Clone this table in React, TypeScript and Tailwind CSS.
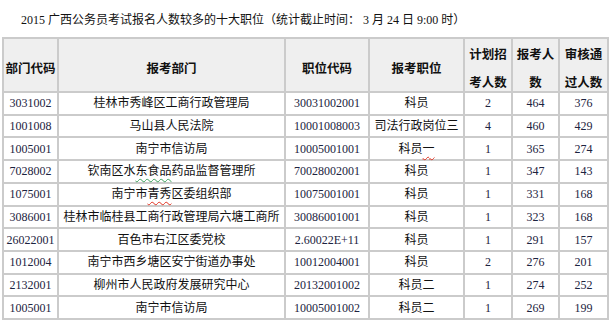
import React from "react";

interface Row {
  dept: string;
  name: React.ReactNode;
  code: string;
  post: React.ReactNode;
  plan: number;
  applied: number;
  passed: number;
}

const squiggleRed = "underline decoration-wavy decoration-[#e0301e] decoration-1 underline-offset-[3px]";
const squiggleGreen = "underline decoration-wavy decoration-[#3aa05a] decoration-1 underline-offset-[3px]";

const rows: Row[] = [
  { dept: "3031002", name: "桂林市秀峰区工商行政管理局", code: "30031002001", post: "科员", plan: 2, applied: 464, passed: 376 },
  { dept: "1001008", name: "马山县人民法院", code: "10001008003", post: "司法行政岗位三", plan: 4, applied: 460, passed: 429 },
  {
    dept: "1005001",
    name: "南宁市信访局",
    code: "10005001001",
    post: (
      <>
        科员<span className={squiggleRed}>一</span>
      </>
    ),
    plan: 1,
    applied: 365,
    passed: 274,
  },
  {
    dept: "7028002",
    name: (
      <>
        钦南区水<span className={squiggleGreen}>东食品</span>药品监督管理所
      </>
    ),
    code: "70028002001",
    post: "科员",
    plan: 1,
    applied: 347,
    passed: 143,
  },
  {
    dept: "1075001",
    name: (
      <>
        南宁市<span className={squiggleRed}>青秀</span>区委组织部
      </>
    ),
    code: "10075001001",
    post: "科员",
    plan: 1,
    applied: 331,
    passed: 168,
  },
  { dept: "3086001", name: "桂林市临桂县工商行政管理局六塘工商所", code: "30086001001", post: "科员", plan: 1, applied: 323, passed: 168 },
  { dept: "26022001", name: "百色市右江区委党校", code: "2.60022E+11", post: "科员", plan: 1, applied: 291, passed: 157 },
  { dept: "1012004", name: "南宁市西乡塘区安宁街道办事处", code: "10012004001", post: "科员", plan: 2, applied: 276, passed: 201 },
  { dept: "2132001", name: "柳州市人民政府发展研究中心", code: "20132001002", post: "科员二", plan: 1, applied: 274, passed: 252 },
  { dept: "1005001", name: "南宁市信访局", code: "10005001002", post: "科员二", plan: 1, applied: 269, passed: 199 },
];

const head = "bg-[#efefef] flex items-center justify-center text-center font-bold text-[12.5px] text-[#111] pt-[8px]";
const cell = "bg-white flex items-center justify-center text-center whitespace-nowrap";
const num = "text-[#1c2340]";

export default function App() {
  return (
    <div className="w-[611px] h-[325px] bg-white font-['Liberation_Serif','Noto_Sans_CJK_SC',serif] text-[12px] text-[#111] overflow-hidden">
      <div className="h-[37px] pl-[21px] pt-[11px] leading-[18px] text-[12px] text-[#111]">
        2015 广西公务员考试报名人数较多的十大职位（统计截止时间： 3 月 24 日 9:00 时）
      </div>

      <div className="ml-[2px] w-[607px] h-[283px] p-[2px] bg-[#cbcbcb] grid grid-cols-[53px_225px_82px_93px_46px_45px_47px] grid-rows-[52px_repeat(10,minmax(0,1fr))] gap-[2px]">
        <div className={head}>部门代码</div>
        <div className={head}>报考部门</div>
        <div className={head}>职位代码</div>
        <div className={head}>报考职位</div>
        <div className={`${head} leading-[28px]`}>
          计划招
          <br />
          考人数
        </div>
        <div className={`${head} leading-[28px]`}>
          报考人
          <br />
          数
        </div>
        <div className={`${head} leading-[28px]`}>
          审核通
          <br />
          过人数
        </div>

        {rows.map((r, i) => (
          <React.Fragment key={i}>
            <div className={`${cell} ${num}`}>{r.dept}</div>
            <div className={cell}>{r.name}</div>
            <div className={`${cell} ${num}`}>{r.code}</div>
            <div className={cell}>{r.post}</div>
            <div className={`${cell} ${num}`}>{r.plan}</div>
            <div className={`${cell} ${num}`}>{r.applied}</div>
            <div className={`${cell} ${num}`}>{r.passed}</div>
          </React.Fragment>
        ))}
      </div>
    </div>
  );
}
